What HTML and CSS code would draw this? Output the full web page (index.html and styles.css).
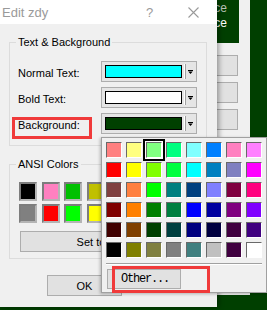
FILE: index.html
```html
<!DOCTYPE html>
<html lang="en">
<head>
    <meta charset="UTF-8">
    <title>Edit zdy</title>
    <link rel="stylesheet" href="styles.css">
</head>
<body>
<div class="desk">
    <div class="backwin">
        <div class="preview">
            <div class="dim">Sentence</div>
            <div>Sentence</div>
        </div>
        <div class="backbtns">
            <button class="btn back-btn"></button>
            <button class="btn back-btn"></button>
            <button class="btn back-btn"></button>
        </div>
    </div>

    <div class="dialog">
        <div class="titlebar">
            <span class="title">Edit zdy</span>
            <span class="help">?</span>
            <svg class="close" width="11" height="11" viewBox="0 0 11 11"><path d="M0.5 0.5l10 10M10.5 0.5l-10 10" stroke="#9a9a9a" stroke-width="1.1" fill="none"/></svg>
        </div>
        <div class="dlg-body">
            <fieldset class="group">
                <legend>Text &amp; Background</legend>
                <div class="color-rows">
                    <label>Normal Text:</label>
                    <div class="combo"><span class="chip" style="background:#00ffff"></span><span class="sep"></span><svg width="5" height="4" viewBox="0 0 5 4"><path d="M0 0h5v1H0zM0.3 1.6h4.4L2.5 4z"/></svg></div>
                    <label>Bold Text:</label>
                    <div class="combo"><span class="chip" style="background:#ffffff"></span><span class="sep"></span><svg width="5" height="4" viewBox="0 0 5 4"><path d="M0 0h5v1H0zM0.3 1.6h4.4L2.5 4z"/></svg></div>
                    <label>Background:</label>
                    <div class="combo"><span class="chip" style="background:#004000"></span><span class="sep"></span><svg width="5" height="4" viewBox="0 0 5 4"><path d="M0 0h5v1H0zM0.3 1.6h4.4L2.5 4z"/></svg></div>
                </div>
            </fieldset>

            <fieldset class="group ansi">
                <legend>ANSI Colors</legend>
                <div class="ansi-grid">
                    <span style="background:#000000"></span>
                    <span style="background:#ff80c0"></span>
                    <span style="background:#00c000"></span>
                    <span style="background:#c0c000"></span>
                    <span style="background:#0000c0"></span>
                    <span style="background:#c000c0"></span>
                    <span style="background:#00c0c0"></span>
                    <span style="background:#c0c0c0"></span>
                    <span style="background:#808080"></span>
                    <span style="background:#ff0000"></span>
                    <span style="background:#00ff00"></span>
                    <span style="background:#ffff00"></span>
                    <span style="background:#0000ff"></span>
                    <span style="background:#ff00ff"></span>
                    <span style="background:#00ffff"></span>
                    <span style="background:#ffffff"></span>
                </div>
                <button class="btn wide">Set to default</button>
            </fieldset>

            <div class="dlg-buttons">
                <button class="btn ok">OK</button>
            </div>
        </div>
    </div>

    <div class="palette">
        <div class="pal-grid">
            <span style="background:#ff8080"></span>
            <span style="background:#ffff80"></span>
            <span class="picked" style="background:#80ff80"></span>
            <span style="background:#00ff80"></span>
            <span style="background:#80ffff"></span>
            <span style="background:#0080ff"></span>
            <span style="background:#ff80c0"></span>
            <span style="background:#ff80ff"></span>

            <span style="background:#ff0000"></span>
            <span style="background:#ffff00"></span>
            <span style="background:#80ff00"></span>
            <span style="background:#00ff40"></span>
            <span style="background:#00ffff"></span>
            <span style="background:#0080c0"></span>
            <span style="background:#8080c0"></span>
            <span style="background:#ff00ff"></span>

            <span style="background:#804040"></span>
            <span style="background:#ff8040"></span>
            <span style="background:#00ff00"></span>
            <span style="background:#008080"></span>
            <span style="background:#004080"></span>
            <span style="background:#8080ff"></span>
            <span style="background:#800040"></span>
            <span style="background:#ff0080"></span>

            <span style="background:#800000"></span>
            <span style="background:#ff8000"></span>
            <span style="background:#008000"></span>
            <span style="background:#008040"></span>
            <span style="background:#0000ff"></span>
            <span style="background:#0000a0"></span>
            <span style="background:#800080"></span>
            <span style="background:#8000ff"></span>

            <span style="background:#400000"></span>
            <span style="background:#804000"></span>
            <span style="background:#004000"></span>
            <span style="background:#004040"></span>
            <span style="background:#000080"></span>
            <span style="background:#000040"></span>
            <span style="background:#400040"></span>
            <span style="background:#400080"></span>

            <span style="background:#000000"></span>
            <span style="background:#808000"></span>
            <span style="background:#808040"></span>
            <span style="background:#808080"></span>
            <span style="background:#408080"></span>
            <span style="background:#c0c0c0"></span>
            <span style="background:#400040"></span>
            <span style="background:#ffffff"></span>
        </div>
        <div class="pal-sep"></div>
        <button class="btn other">Other...</button>
    </div>

    <div class="mark mark-bg"></div>
    <div class="mark mark-other"></div>
</div>
</body>
</html>
```

FILE: styles.css
```css
* {
    box-sizing: border-box;
}

body {
    margin: 0;
    width: 267px;
    height: 310px;
    overflow: hidden;
    background: #003f00;
    font-family: "Liberation Sans", Arial, sans-serif;
    font-size: 11px;
    color: #000;
}

.desk {
    position: relative;
    width: 267px;
    height: 310px;
}

.btn {
    font: inherit;
    color: #000;
    background: #e1e1e1;
    border: 1px solid #adadad;
    padding: 0;
}

/* window behind the dialog */
.backwin {
    position: absolute;
    left: 110px;
    top: 0px;
    width: 140px;
    height: 295px;
    background: #f0f0f0;
}

.preview {
    height: 43px;
    margin-right: 11px;
    padding: 1px 12px 0 0;
    background: #003f00;
    color: #fff;
    font-size: 12px;
    line-height: 15px;
    text-align: right;
}

.preview .dim {
    color: #b9c4b9;
}

.backbtns {
    display: flex;
    flex-direction: column;
    align-items: flex-end;
    gap: 6px;
    padding: 12px 12px 0 0;
}

.back-btn {
    width: 70px;
    height: 21px;
}

/* dialog */
.dialog {
    position: absolute;
    left: 0px;
    top: 0px;
    width: 217px;
    height: 307px;
    background: #f0f0f0;
    box-shadow: 2px 0 5px rgba(0, 0, 0, 0.35);
}

.titlebar {
    height: 24px;
    display: flex;
    align-items: center;
    background: #fff;
    color: #9a9a9a;
    font-size: 13px;
}

.title {
    flex: 1;
    padding-left: 2px;
}

.help {
    width: 7px;
}

.close {
    margin: 0 18px 0 35px;
}

.dlg-body {
    padding: 11px 0 0 9px;
}

.group {
    width: 198px;
    margin: 0;
    min-inline-size: 0;
    border: 1px solid #dcdcdc;
    padding: 12px 9px 11px 8px;
}

.group legend {
    padding: 0 2px;
    margin-left: -2px;
    line-height: 14px;
}

.color-rows {
    display: grid;
    grid-template-columns: 83px 96px;
    row-gap: 5px;
    align-items: center;
}

.color-rows label {
    padding-top: 2px;
}

.combo {
    height: 21px;
    display: flex;
    align-items: center;
    padding: 0 3px;
    border: 1px solid #adadad;
    background: #e5e5e5;
}

.chip {
    width: 77px;
    height: 13px;
    border: 1px solid #000;
}

.sep {
    width: 2px;
    height: 15px;
    margin: 0 2px 0 2px;
    border-left: 1px solid #fff;
    border-right: 1px solid #a0a0a0;
}

.ansi {
    margin-top: 11px;
    padding: 11px 9px 6px 9px;
}

.ansi legend {
    margin-left: -3px;
}

.ansi-grid {
    display: grid;
    grid-template-columns: repeat(8, 18px);
    grid-auto-rows: 19px;
    column-gap: 4.7px;
    row-gap: 3px;
}

.ansi-grid span {
    border: 2px solid;
    border-color: #7d7d7d #b4b4b4 #b4b4b4 #7d7d7d;
}

.wide {
    display: block;
    width: 178px;
    height: 21px;
    margin: 8px 0 0 1px;
}

.dlg-buttons {
    padding: 16px 0 0 38px;
}

.ok {
    width: 75px;
    height: 21px;
}

/* colour drop-down */
.palette {
    position: absolute;
    left: 101px;
    top: 137px;
    width: 166px;
    height: 156px;
    padding: 4px;
    background: #f0f0f0;
    border: 1px solid #a0a0a0;
    box-shadow: -1px 1px 3px rgba(0, 0, 0, 0.25);
}

.pal-grid {
    display: grid;
    grid-template-columns: repeat(8, 16px);
    grid-auto-rows: 16px;
    gap: 4px;
}

.pal-grid span {
    border: 1px solid;
    border-color: #696969 #fff #fff #696969;
}

.pal-grid .picked {
    box-shadow: 0 0 0 1px #fff, 0 0 0 3px #000;
}

.pal-sep {
    margin-top: 5px;
    border-top: 1px solid #a0a0a0;
    border-bottom: 1px solid #fff;
}

.other {
    display: block;
    width: 74px;
    height: 20px;
    margin: 4px 0 0 1px;
    padding-left: 2px;
    font-family: "Liberation Mono", monospace;
    font-size: 12px;
    letter-spacing: -1.2px;
}

/* red annotation frames */
.mark {
    position: absolute;
    border: 3px solid #f03a3a;
}

.mark-bg {
    left: 12px;
    top: 117px;
    width: 80px;
    height: 22px;
}

.mark-other {
    left: 112px;
    top: 266px;
    width: 98px;
    height: 27px;
}
```
